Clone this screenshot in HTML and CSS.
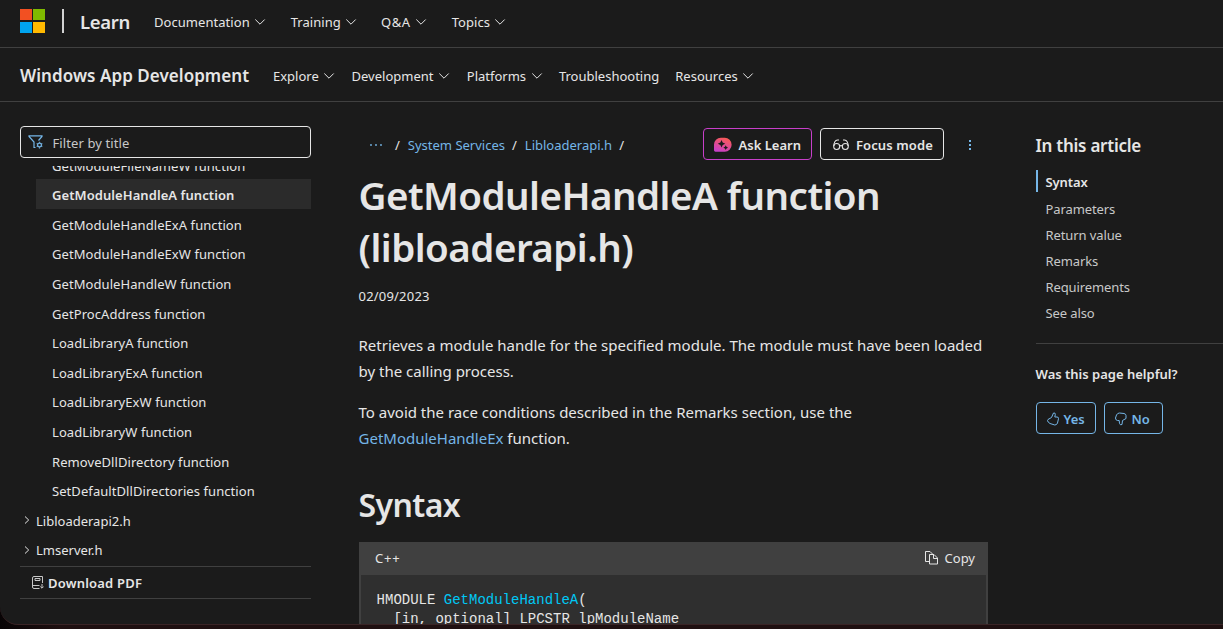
FILE: index.html
```html
<!DOCTYPE html>
<html lang="en">
<head>
<meta charset="utf-8">
<title>GetModuleHandleA function (libloaderapi.h)</title>
<link rel="stylesheet" href="styles.css">
</head>
<body>
<svg class="defs" width="0" height="0">
  <symbol id="chev" viewBox="0 0 12 8"><path d="M1.300 1.500 6 6.200 10.700 1.500" fill="none" stroke="currentColor" stroke-width="1"/></symbol>
  <symbol id="right" viewBox="0 0 6 8"><path d="M1 .5 4.700 4 1 7.500" fill="none" stroke="currentColor" stroke-width="1"/></symbol>
</svg>
<div class="window">
  <header class="topbar">
    <span class="logo"><i class="red"></i><i class="green"></i><i class="blue"></i><i class="yellow"></i></span>
    <span class="divider"></span>
    <a class="brand">Learn</a>
    <nav class="topnav">
      <a>Documentation<svg class="chev"><use href="#chev"/></svg></a>
      <a>Training<svg class="chev"><use href="#chev"/></svg></a>
      <a class="qa">Q&amp;A<svg class="chev"><use href="#chev"/></svg></a>
      <a>Topics<svg class="chev"><use href="#chev"/></svg></a>
    </nav>
  </header>
  <header class="subbar">
    <a class="product">Windows App Development</a>
    <nav class="subnav">
      <a>Explore<svg class="chev"><use href="#chev"/></svg></a>
      <a>Development<svg class="chev"><use href="#chev"/></svg></a>
      <a>Platforms<svg class="chev"><use href="#chev"/></svg></a>
      <a>Troubleshooting</a>
      <a>Resources<svg class="chev"><use href="#chev"/></svg></a>
    </nav>
  </header>
  <div class="layout">
    <aside class="sidebar">
      <div class="filter">
        <svg width="16" height="14" viewBox="0 0 16 14" fill="none" stroke="#75b6e7" stroke-width="1.200"><path d="M7.500 12.500H6V7L1 1.500V.8h13v.7L10.500 5.500"/><circle cx="11.500" cy="10" r="1.900"/><path d="M11.500 6.800v1M11.500 12.200v1.200M8.700 8.400l.9.5M13.400 11.100l.9.5M14.300 8.400l-.9.5M9.600 11.100l-.9.5"/></svg>
        <span>Filter by title</span>
      </div>
      <div class="tree">
        <div class="tree-inner">
          <a class="leaf">GetModuleFileNameW function</a>
          <a class="leaf selected">GetModuleHandleA function</a>
          <a class="leaf">GetModuleHandleExA function</a>
          <a class="leaf">GetModuleHandleExW function</a>
          <a class="leaf">GetModuleHandleW function</a>
          <a class="leaf">GetProcAddress function</a>
          <a class="leaf">LoadLibraryA function</a>
          <a class="leaf">LoadLibraryExA function</a>
          <a class="leaf">LoadLibraryExW function</a>
          <a class="leaf">LoadLibraryW function</a>
          <a class="leaf">RemoveDllDirectory function</a>
          <a class="leaf">SetDefaultDllDirectories function</a>
          <a class="branch"><svg class="right"><use href="#right"/></svg>Libloaderapi2.h</a>
          <a class="branch"><svg class="right"><use href="#right"/></svg>Lmserver.h</a>
        </div>
      </div>
      <div class="pdf">
        <svg width="12" height="13" viewBox="0 0 12 13" fill="none" stroke="#c8c8c8"><path d="M10.500 7V.5H2Q.5.500.5 2v9q0 1.500 1.500 1.500h5.500M.5 9.500h7M3 2.500h5v2H3zM10 8v4M8.300 10.500 10 12.200l1.700-1.700"/></svg>
        <span>Download PDF</span>
      </div>
    </aside>
    <main class="article">
      <div class="tools">
        <div class="crumbs">
          <svg class="dots" width="14" height="4" viewBox="0 0 14 4" fill="#75b6e7"><circle cx="2" cy="2" r=".9"/><circle cx="7" cy="2" r=".9"/><circle cx="12" cy="2" r=".9"/></svg>
          <span>/</span><a>System Services</a><span>/</span><a>Libloaderapi.h</a><span>/</span>
        </div>
        <button class="btn ask">
          <svg width="18" height="16" viewBox="0 0 18 16"><defs><linearGradient id="g" x1=".7" y1="0" x2=".3" y2="1"><stop offset="0" stop-color="#fb5b52"/><stop offset="1" stop-color="#c83fca"/></linearGradient></defs><path d="M7 .5h4a7 7.200 0 0 1 0 14.500H1.500Q0 15 0 13.500V7.500A7 7 0 0 1 7 .5z" fill="url(#g)"/><path d="M7.700 2.800 8.900 5.500 11.500 6.700 8.900 7.900 7.700 10.600 6.500 7.900 3.900 6.700 6.500 5.500zM12 8.300l.8 1.600 1.600.8-1.600.8-.8 1.600-.8-1.600-1.600-.8 1.600-.8z" fill="#1b1b1b"/></svg>
          <span>Ask Learn</span>
        </button>
        <button class="btn focus">
          <svg width="16" height="12" viewBox="0 0 16 12" fill="none" stroke="currentColor" stroke-width="1.100"><circle cx="3.700" cy="7.500" r="3"/><circle cx="12.300" cy="7.500" r="3"/><path d="M6.700 7q1.300-.9 2.600 0M.8 7Q1 1.500 4.500 1H6M15.200 7Q15 1.500 11.500 1H10"/></svg>
          <span>Focus mode</span>
        </button>
        <svg class="more" width="4" height="12" viewBox="0 0 4 12" fill="#75b6e7"><path d="M1 1h2v2H1zM1 5h2v2H1zM1 9h2v2H1z"/></svg>
      </div>
      <h1>GetModuleHandleA function<br>(libloaderapi.h)</h1>
      <p class="date">02/09/2023</p>
      <p class="text">Retrieves a module handle for the specified module. The module must have been loaded<br>by the calling process.</p>
      <p class="text">To avoid the race conditions described in the Remarks section, use the<br><a>GetModuleHandleEx</a> function.</p>
      <h2>Syntax</h2>
      <div class="code-head"><span>C++</span>
        <span class="copy"><svg width="14" height="14" viewBox="0 0 14 14" fill="none" stroke="currentColor"><path d="M4.500 10.500h-4v-10h4.500l2.500 2.500M4.500 3.500h4.500l3.500 3.500v6h-8zM8.500 3.500V7.500h4"/></svg>Copy</span>
      </div>
      <pre class="code">HMODULE <b>GetModuleHandleA</b>(
  [in, optional] LPCSTR lpModuleName
);</pre>
    </main>
    <aside class="toc">
      <h3>In this article</h3>
      <ul>
        <li class="current">Syntax</li>
        <li>Parameters</li>
        <li>Return value</li>
        <li>Remarks</li>
        <li>Requirements</li>
        <li>See also</li>
      </ul>
      <div class="feedback">
        <h4>Was this page helpful?</h4>
        <div class="votes">
          <button class="vote yes"><svg width="12" height="14" viewBox="0 0 12 14" fill="none" stroke="currentColor"><path d="M1 7.500 4.500 5.500 6.500 1Q8.500.5 8.300 2.500L7.800 5H10q1.700 0 1.500 1.700l-1 4.300q-.7 2-2.700 2L3 11.500Q.5 10 .5 8.500z"/></svg>Yes</button>
          <button class="vote no"><svg width="12" height="14" viewBox="0 0 12 14" fill="none" stroke="currentColor"><path d="M11 6.500 7.500 8.500 7 12.500Q5.200 13.500 4.500 11.500L4.200 8.500H2.500Q.3 8 .5 6L1.500 3Q2.500 1 4.500 1L9 1.500q2 .5 2 2z"/></svg>No</button>
        </div>
      </div>
    </aside>
  </div>
</div>
</body>
</html>
```

FILE: styles.css
```css
* { box-sizing: border-box; }
html { background: #100808; }
body {
  margin: 0;
  height: 629px;
  overflow: hidden;
  background: linear-gradient(90deg, #080405, #1f1011 60px);
  color: #e6e6e6;
  font: 14px/20px "Noto Sans", sans-serif;
}
.defs { display: block; }
.window {
  height: 625px;
  display: flex;
  flex-direction: column;
  overflow: hidden;
  background: #1b1b1b;
  border-bottom: 1px solid #3a2426;
  border-bottom-left-radius: 18px;
}
h1, h2, h3, h4, p, ul, pre { margin: 0; padding: 0; font-weight: 600; }
.topbar, .subbar {
  display: flex;
  align-items: center;
  flex: none;
  padding-left: 20px;
  border-bottom: 1px solid #404040;
  white-space: nowrap;
}
.topbar { height: 48px; padding-bottom: 4px; }
.subbar { height: 54px; padding-top: 2px; }
.logo { display: grid; grid-template-columns: 12px 12px; grid-template-rows: 11px 11px; gap: 2px 1px; width: 25px; margin-top: -2px; }
.red { background: #f25022; }
.green { background: #7fba00; }
.blue { background: #00a4ef; }
.yellow { background: #ffb900; }
.divider { width: 2px; height: 24px; margin: -2px 16px 0 17px; background: #d2d2d2; }
.brand { width: 50px; font-size: 18.500px; font-weight: 600; letter-spacing: -.3px; }
.topnav { display: flex; gap: 24px; margin-left: 24px; }
.subnav { display: flex; gap: 16px; margin-left: 24px; }
.topnav a, .subnav a { display: flex; align-items: center; font-size: 13px; }
.topnav a { letter-spacing: .05px; }
.topnav .qa { letter-spacing: .6px; margin-left: -1px; }
.product { width: 229px; font-size: 17px; font-weight: 600; letter-spacing: .05px; }
.chev { width: 12px; height: 8px; margin-left: 5px; }
.topnav .chev { margin-left: 4.500px; margin-right: .5px; }
.subnav .chev { margin-left: 4.500px; margin-right: -.5px; }
.subnav a { margin-right: .8px; }
.subnav a:nth-child(2) { margin-right: 1.300px; }
.subnav a:nth-child(4) { margin-right: 0; }
.layout { flex: 1; min-height: 0; display: grid; grid-template-columns: 291px 629px 187px; gap: 48px; padding-left: 20px; }
.sidebar { padding-top: 24px; }
.filter {
  display: flex;
  align-items: center;
  height: 32px;
  padding: 0 7px;
  gap: 8.500px;
  border: 1px solid #e6e6e6;
  border-radius: 4px;
  font-size: 13px;
  letter-spacing: .1px;
  color: #c8c8c8;
}
.filter span { padding-top: 2px; }
.tree { height: 400px; margin-top: 8px; overflow: hidden; }
.tree-inner { margin-top: -16.400px; font-size: 13px; }
.leaf, .branch { display: block; height: 29.600px; line-height: 32.200px; white-space: nowrap; }
.leaf { margin-left: 16px; padding-left: 16px; letter-spacing: .07px; }
.selected { background: #2b2b2b; font-weight: 600; }
.branch { display: flex; align-items: center; padding: 2.800px 0 0 4px; }
.right { width: 6px; height: 8px; margin-right: 6px; margin-top: -2px; }
.pdf { display: flex; align-items: center; gap: 4px; height: 33px; padding-left: 12px; border: solid #404040; border-width: 1px 0; font-size: 13px; font-weight: 600; letter-spacing: .2px; }
.article { min-width: 0; padding-top: 26px; }
.article a { color: #75b6e7; }
.tools { display: flex; align-items: center; height: 32px; }
.crumbs { display: flex; align-items: center; width: 344px; padding: 2px 0 0 10px; gap: 8px; font-size: 13px; }
.crumbs a { margin-right: -1px; }
.dots { margin-right: 4px; }
.btn, .vote { display: flex; align-items: center; height: 32px; padding: 1px 10px 0; border: 1px solid #e6e6e6; border-radius: 4px; background: none; color: #e6e6e6; font: 600 13px/20px "Noto Sans", sans-serif; white-space: nowrap; }
.ask { width: 109px; gap: 7px; border-color: #c83fca; }
.focus { width: 124px; margin-left: 8px; padding-left: 12px; gap: 7px; letter-spacing: .1px; }
.more { margin: 1px 0 0 24px; }
h1 { margin-top: 9px; margin-left: -.5px; font-size: 38.500px; font-weight: 600; line-height: 52px; letter-spacing: -.53px; white-space: nowrap; }
.date { margin-top: 13px; margin-left: -.5px; font-size: 13px; font-weight: 400; line-height: 20px; letter-spacing: .2px; }
.text { margin-top: 26px; margin-left: -.5px; font-size: 15px; font-weight: 400; line-height: 26px; white-space: nowrap; }
.text + .text { margin-top: 15px; }
h2 { margin-top: 33px; margin-left: -.5px; font-size: 32px; font-weight: 600; line-height: 42px; letter-spacing: -.6px; }
.code-head { display: flex; justify-content: space-between; align-items: center; height: 32px; margin-top: 16px; padding: 0 13px 0 16px; background: #404040; font-size: 13px; }
.code-head > span:first-child { letter-spacing: .8px; }
.copy { display: flex; align-items: center; gap: 6px; }
.code { height: 80px; padding: 16px 15.600px; border: 2px solid #404040; border-top-width: 1px; background: #2f2f2f; font: 14px/19px "Liberation Mono", monospace; }
.code b { color: #00c8f5; font-weight: 400; }
.toc { padding-top: 32px; white-space: nowrap; }
.toc h3 { margin-left: -.5px; font-size: 17px; font-weight: 600; line-height: 24px; letter-spacing: -.25px; }
.toc ul { margin-top: 12px; list-style: none; font-size: 13px; font-weight: 400; color: #c8c8c8; }
.toc li { padding-left: 9.500px; line-height: 26px; letter-spacing: -.1px; }
.toc .current { margin: 1px 0 4px; padding-left: 7.500px; border-left: 2px solid #75b6e7; line-height: 24px; height: 22px; color: #e6e6e6; font-weight: 600; }
.feedback { margin-top: 17px; padding-top: 20px; border-top: 1px solid #404040; }
.feedback h4 { margin-left: -.5px; font-size: 13px; line-height: 20px; }
.votes { display: flex; gap: 8px; margin-top: 18px; }
.vote { border-color: #75b6e7; color: #75b6e7; gap: 4.500px; }
.yes { width: 60px; }
.no { width: 59px; }
```
